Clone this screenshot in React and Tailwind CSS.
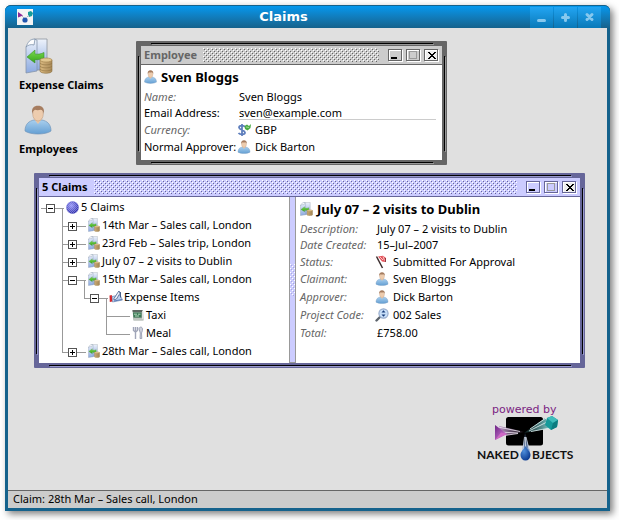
import React from 'react';

const SANS = "font-['Noto_Sans','Open_Sans',sans-serif]";

function ClaimIcon({ className }) {
  return (
    <svg viewBox="0 0 28 36" className={className} aria-hidden="true" preserveAspectRatio="none">
      <defs>
        <linearGradient id="page" x1="0" y1="0" x2="0" y2="1">
          <stop offset="0" stopColor="#eef3fb" />
          <stop offset="1" stopColor="#8ba9e0" />
        </linearGradient>
        <linearGradient id="coin" x1="0" y1="0" x2="1" y2="0">
          <stop offset="0" stopColor="#d9b880" />
          <stop offset="1" stopColor="#a98a58" />
        </linearGradient>
        <linearGradient id="arrow" x1="0" y1="0" x2="0" y2="1">
          <stop offset="0" stopColor="#7ada4e" />
          <stop offset="1" stopColor="#38a51b" />
        </linearGradient>
      </defs>
      <path d="M10 1h12v31H10z" fill="url(#page)" stroke="#8d959f" strokeWidth=".8" />
      <path d="M9 1l3 1v31L1 35V9z" fill="url(#page)" stroke="#8796aa" strokeWidth=".8" />
      <path d="M1 9C3 4 5 1 10 1L9 7c-3-1-6 0-8 2z" fill="#fdfdfe" stroke="#7f93ab" strokeWidth=".8" />
      <path d="M2 19l8-7v4c3 .5 6 0 9-1.500V20c-3 1.500-6 2-9 1.500V25z" fill="url(#arrow)" stroke="#3a8f2b" strokeWidth=".6" />
      <path d="M15 22v11c0 3 12 3 12 0V22z" fill="url(#coin)" stroke="#8c7040" strokeWidth=".6" />
      <path d="M15 25c1 2.500 11 2.500 12 0M15 28c1 2.500 11 2.500 12 0M15 31c1 2.500 11 2.500 12 0" fill="none" stroke="#8f7242" strokeWidth=".6" />
      <ellipse cx="21" cy="22" rx="6" ry="2" fill="#e2c68f" stroke="#a07f4a" strokeWidth=".6" />
    </svg>
  );
}

function PersonIcon({ className }) {
  return (
    <svg viewBox="0 0 28 30" className={className} aria-hidden="true">
      <defs>
        <linearGradient id="shirt" x1="0" y1="0" x2="0" y2="1">
          <stop offset="0" stopColor="#a9cfee" />
          <stop offset="1" stopColor="#649fd3" />
        </linearGradient>
      </defs>
      <path d="M1 26c0-7 4-10 9-11h8c5 1 9 4 9 11-5 4-21 4-26 0z" fill="url(#shirt)" stroke="#7396ba" strokeWidth=".7" />
      <path d="M10 14l4 5 4-5-1-3h-6z" fill="#e8c5a5" />
      <ellipse cx="14" cy="9" rx="5.300" ry="7" fill="#edccae" stroke="#b9977b" strokeWidth=".5" />
      <path d="M8.300 9C7 3 10 .7 14 .7S21 3 19.700 9c-.4-3-1.500-4-3-4.200-2 .5-4 .5-5.700 0-1.500.7-2.400 2-2.700 4.200z" fill="#a67d60" />
    </svg>
  );
}

function CurrencyIcon({ className }) {
  return (
    <svg viewBox="0 0 14 14" className={className} aria-hidden="true">
      <path d="M8 4C7 2 2 2 2 4.500S8 7 8 9.500 3 12 1.500 10M5 1v12" fill="none" stroke="#5f7fbd" strokeWidth="1.800" />
      <path d="M7.500 3l2.500-1.500L12 3l2-2-.5 4-3 2.500L8 6z" fill="#4cab45" />
      <path d="M9 4l3 .5" stroke="#a8dd9c" strokeWidth=".9" />
    </svg>
  );
}

function FlagIcon({ className }) {
  return (
    <svg viewBox="0 0 14 14" className={className} aria-hidden="true">
      <path d="M3 1.500L8 .8l3 2.200-.5 4L7 6.500z" fill="#e4525a" />
      <path d="M5 2l3 3M8 1.500l1.500 4" stroke="#f8c4c5" strokeWidth="1" />
      <path d="M1.500 1.500l6 11.500" stroke="#3a2c2c" strokeWidth="1.500" />
      <path d="M10.500 3v4" stroke="#7c2a2f" strokeWidth=".8" />
    </svg>
  );
}

function MagnifierIcon({ className }) {
  return (
    <svg viewBox="0 0 14 14" className={className} aria-hidden="true">
      <path d="M1.500 12.500l3.500-3.500" stroke="#5d646c" strokeWidth="2.400" strokeLinecap="round" />
      <circle cx="8.500" cy="5.500" r="4.600" fill="#c8dff8" stroke="#93a8c9" strokeWidth="1.100" />
      <path d="M8.500 2.300l2 2.300h-4zM8.500 8.700l2-2.300h-4z" fill="#173c7b" />
    </svg>
  );
}

function BallIcon({ className }) {
  return (
    <svg viewBox="0 0 13 13" className={className} aria-hidden="true">
      <defs>
        <radialGradient id="ball" cx=".4" cy=".35" r=".65">
          <stop offset="0" stopColor="#9c9cf8" />
          <stop offset="1" stopColor="#2e2ea6" />
        </radialGradient>
        <pattern id="weave" width="2" height="2" patternUnits="userSpaceOnUse">
          <path d="M0 0h1v1H0zM1 1h1v1H1z" fill="#b9b9ff" opacity=".45" />
        </pattern>
      </defs>
      <circle cx="6.500" cy="6.500" r="6.200" fill="url(#ball)" />
      <circle cx="6.500" cy="6.500" r="6.200" fill="url(#weave)" />
    </svg>
  );
}

function ItemsIcon({ className }) {
  return (
    <svg viewBox="0 0 14 14" className={className} aria-hidden="true">
      <path d="M3 6.500l8-1.500 2.500 5-10 2z" fill="#bdd0ee" stroke="#6d88b4" strokeWidth=".7" />
      <path d="M.5 5.500l2.300-.5.400 6.500-2.400.5z" fill="#d2262c" />
      <path d="M5 8.500L9.500 1.500l2 1-4 6.500-2.500 1z" fill="#eef2f9" stroke="#4a6391" strokeWidth=".8" />
      <path d="M9.500 1.500l2 1v5" fill="none" stroke="#35517f" strokeWidth=".9" />
      <path d="M5 11l8-1.500" stroke="#5b7db8" strokeWidth="1" />
    </svg>
  );
}

function TaxiIcon({ className }) {
  return (
    <svg viewBox="0 0 12 12" className={className} aria-hidden="true">
      <path d="M.5 1h10.500l.5 10.500H1.500z" fill="#9ba59d" />
      <path d="M.5 1H10v2H.700z" fill="#5c6660" />
      <path d="M1 3.500h8.500v5H1.500z" fill="#3b7a56" />
      <path d="M2 5.200h3M6 5.200h2.500M3 7h4" stroke="#c0e2c6" strokeWidth=".9" />
      <path d="M2 10h9M10.500 2v8" stroke="#dfe3df" />
    </svg>
  );
}

function MealIcon({ className }) {
  return (
    <svg viewBox="0 0 12 14" className={className} aria-hidden="true">
      <path d="M1.500 1v3.500l2 1.500 2-1.500V1M3.500 1v12" fill="none" stroke="#a0a5b8" strokeWidth="1.400" />
      <path d="M7 3c0-2.500 3.500-2.500 3.500 0s-.5 2.500-1 4l.3 5.500H8L8.300 7z" fill="#ccd0dc" stroke="#999eb2" strokeWidth=".9" />
    </svg>
  );
}

const TONES = {
  gray: {
    frame: 'bg-[#666666]',
    glow: 'bg-[#999999]',
    bar: 'bg-[#cccccc] text-[#666666] border-[#666666]',
    fill: '#cccccc',
    dark: '#666666',
  },
  violet: {
    frame: 'bg-[#666699]',
    glow: 'bg-[#9999cc]',
    bar: 'bg-[#ccccff] text-black border-[#666699]',
    fill: '#ccccff',
    dark: '#666699',
  },
};

function Bumps({ id, fill, dark }) {
  return (
    <svg className="block h-full w-full" shapeRendering="crispEdges" aria-hidden="true">
      <defs>
        <pattern id={id} width="4" height="4" patternUnits="userSpaceOnUse">
          <rect width="4" height="4" fill={fill} />
          <path d="M0 0h1v1H0zM2 2h1v1H2z" fill="#fff" />
          <path d="M1 1h1v1H1zM3 3h1v1H3z" fill={dark} />
        </pattern>
      </defs>
      <rect width="100%" height="100%" fill={`url(#${id})`} />
    </svg>
  );
}

function FrameButton({ label, dark, fill, children }) {
  return (
    <button type="button" aria-label={label} className="h-[13px] w-[15px]">
      <svg viewBox="0 0 15 13" className="block h-[13px] w-[15px]" shapeRendering="crispEdges">
        <path d="M1 1h14v12H1z" fill="#fff" />
        <path d="M0 0h14v12H0z" fill={dark} />
        <path d="M1 1h12v10H1z" fill="#fff" />
        <path d="M2 2h11v9H2z" fill={fill} />
        {children}
      </svg>
    </button>
  );
}

function InnerWindow({ title, tone, className, children }) {
  const t = TONES[tone];
  return (
    <section aria-label={title} className={`absolute flex flex-col rounded-[1px] p-[5px] ${t.frame} ${className}`}>
      <i className="absolute top-[2px] right-[14px] left-[15px] h-px bg-black" />
      <i className={`absolute top-[3px] right-[13px] left-[16px] h-px ${t.glow}`} />
      <i className="absolute right-[14px] bottom-[2px] left-[15px] h-px bg-black" />
      <i className={`absolute right-[13px] bottom-[1px] left-[16px] h-px ${t.glow}`} />
      <i className="absolute top-[15px] bottom-[14px] left-[2px] w-px bg-black" />
      <i className={`absolute top-[16px] bottom-[13px] left-[3px] w-px ${t.glow}`} />
      <i className="absolute top-[15px] right-[2px] bottom-[14px] w-px bg-black" />
      <i className={`absolute top-[16px] right-[1px] bottom-[13px] w-px ${t.glow}`} />
      <header className={`flex h-[19px] shrink-0 items-center border-b pr-[3px] pl-[3px] ${t.bar}`}>
        <h2 className="text-[11px] leading-[16px] font-bold">{title}</h2>
        <div className="mr-[9px] ml-[6px] h-[14px] flex-1">
          <Bumps id={`bumps-${tone}`} fill={t.fill} dark={t.dark} />
        </div>
        <div className="flex gap-[3px]">
          <FrameButton label="Minimize" dark={t.dark} fill={t.fill}>
            <path d="M3 8h6v2H3z" fill="#000" />
          </FrameButton>
          <FrameButton label="Maximize" dark={t.dark} fill={t.fill}>
            <path d="M3 2h8v8H3zM4 3v6h6V3z" fill="#999999" fillRule="evenodd" />
          </FrameButton>
          <FrameButton label="Close" dark={t.dark} fill="#eeeeee">
            <path d="M4 3h2v1h1v1h2V4h1V3h2v1h-1v1h-1v1H9v1h1v1h1v1h1v1h-2V9H9V8H7v1H6v1H4V9h1V8h1V7h1V6H6V5H5V4H4z" fill="#000" />
          </FrameButton>
        </div>
      </header>
      {children}
    </section>
  );
}

function Heading({ icon, children }) {
  return (
    <div className="flex h-6 items-center gap-1 pb-px">
      {icon}
      <h3 className="text-[13px] leading-[18px] font-bold">{children}</h3>
    </div>
  );
}

const ROW_HEIGHTS = { short: 'h-4', middle: 'h-[17px]', tall: 'h-[18px]' };

function Field({ label, plain, icon, size = 'short', labelWidth, children }) {
  return (
    <div className={`flex items-center ${ROW_HEIGHTS[size]}`}>
      <dt className={`shrink-0 ${labelWidth} ${plain ? 'text-black' : 'text-[#666666] italic'}`}>{label}</dt>
      <dd className="flex min-w-0 flex-1 items-center gap-1">
        {icon}
        {children}
      </dd>
    </div>
  );
}

function Cell({ up, down, line, handle }) {
  return (
    <span className="flex h-[18px] w-[22px] shrink-0 items-start">
      <svg className="h-[18px] w-[22px] shrink-0" viewBox="0 0 22 18" shapeRendering="crispEdges" aria-hidden="true">
        {up && <path d="M0 0h1v11H0z" fill="#999999" />}
        {down && <path d="M0 10h1v8H0z" fill="#999999" />}
        {line && <path d="M1 10h21v1H1z" fill="#999999" />}
      </svg>
      {handle && (
        <button type="button" aria-label={handle === 'open' ? 'Collapse' : 'Expand'} className="mt-[6px] -ml-4 h-[9px] w-[9px] shrink-0">
          <svg viewBox="0 0 9 9" className="block h-[9px] w-[9px]" shapeRendering="crispEdges">
            <path d="M0 0h9v9H0z" fill="#555" />
            <path d="M1 1h7v7H1z" fill="#fff" />
            <path d="M2 4h5v1H2z" fill="#000" />
            {handle === 'closed' && <path d="M4 2h1v5H4z" fill="#000" />}
          </svg>
        </button>
      )}
    </span>
  );
}

function Stub({ open }) {
  return (
    <svg className="mr-px h-[18px] w-[3px] shrink-0" viewBox="0 0 3 18" shapeRendering="crispEdges" aria-hidden="true">
      <path d={open ? 'M0 10h2v1H1v7H0z' : 'M0 10h2v1H0z'} fill="#999999" />
    </svg>
  );
}

const T = { up: true, line: true, down: true };
const END = { up: true, line: true };
const V = { up: true, down: true };
const claim = <ClaimIcon className="h-[14px] w-3" />;

const TREE = [
  { cells: [{ line: true, handle: 'open' }], open: true, icon: <BallIcon className="h-[13px] w-[13px]" />, text: '5 Claims' },
  { cells: [{}, { ...T, handle: 'closed' }], icon: claim, text: '14th Mar – Sales call, London' },
  { cells: [{}, { ...T, handle: 'closed' }], icon: claim, text: '23rd Feb – Sales trip, London' },
  { cells: [{}, { ...T, handle: 'closed' }], icon: claim, text: 'July 07 – 2 visits to Dublin' },
  { cells: [{}, { ...T, handle: 'open' }], open: true, icon: claim, text: '15th Mar – Sales call, London' },
  { cells: [{}, V, { ...END, handle: 'open' }], open: true, icon: <ItemsIcon className="-mr-px -ml-px h-[14px] w-[14px]" />, text: 'Expense Items' },
  { cells: [{}, V, {}, T], icon: <TaxiIcon className="h-3 w-3" />, text: 'Taxi' },
  { cells: [{}, V, {}, END], icon: <MealIcon className="h-[14px] w-3" />, text: 'Meal' },
  { cells: [{}, { ...END, handle: 'closed' }], icon: claim, text: '28th Mar – Sales call, London' },
];

function TreeView() {
  return (
    <ul className="w-[250px] shrink-0 bg-white pt-px pl-px text-[11px] leading-[16px]">
      {TREE.map((row) => (
        <li key={row.text} className="flex h-[18px] items-center">
          {row.cells.map((c, i) => (
            <Cell key={i} {...c} />
          ))}
          <Stub open={row.open} />
          {row.icon}
          <span className="ml-[2px] whitespace-nowrap">{row.text}</span>
        </li>
      ))}
    </ul>
  );
}

function TitleButton({ label, children }) {
  return (
    <button type="button" aria-label={label} className="flex h-[21px] w-[23px] items-center justify-center bg-linear-to-b from-[#22a5f3] to-[#0879b8]">
      <svg viewBox="0 0 11 11" className="h-[11px] w-[11px]" fill="none" stroke="#86c8ee" strokeWidth="3" strokeLinecap="round">
        {children}
      </svg>
    </button>
  );
}

function NakedObjectsLogo() {
  return (
    <svg viewBox="0 0 100 60" className="h-[60px] w-[100px]" role="img" aria-label="powered by Naked Objects">
      <defs>
        <linearGradient id="cone" x1="0" y1="0" x2="1" y2="1">
          <stop offset="0" stopColor="#6d2386" />
          <stop offset="1" stopColor="#dd8bdc" />
        </linearGradient>
        <radialGradient id="drop" cx=".35" cy=".35" r=".7">
          <stop offset="0" stopColor="#4f8fdc" />
          <stop offset="1" stopColor="#0b3a90" />
        </radialGradient>
        <linearGradient id="rayPurple" x1="0" y1="0" x2="1" y2="0">
          <stop offset="0" stopColor="#c9a0d6" />
          <stop offset="1" stopColor="#000" />
        </linearGradient>
        <linearGradient id="rayTeal" x1="1" y1="0" x2="0" y2="0">
          <stop offset="0" stopColor="#7cc9ca" />
          <stop offset="1" stopColor="#0a1a1a" />
        </linearGradient>
        <linearGradient id="rayBlue" x1="0" y1="1" x2="0" y2="0">
          <stop offset="0" stopColor="#8db0e6" />
          <stop offset="1" stopColor="#05080f" />
        </linearGradient>
      </defs>
      <text x="16" y="11" fontSize="11" fill="#7b2482" className="font-['DejaVu_Sans',sans-serif]">powered by</text>
      <rect x="30" y="15" width="37" height="28.500" rx="2.500" fill="#000" />
      <path d="M49 30L23 24l-2 11z" fill="url(#rayPurple)" />
      <path d="M44 29.500L22 25M42 31L23 30M42 31.500L25 34" stroke="#f3e9f6" strokeWidth=".8" />
      <path d="M48 31L69 16l6 10z" fill="url(#rayTeal)" />
      <path d="M54 27L70 16M53 29l18-9M55 29.500L74 26" stroke="#e4f5f5" strokeWidth=".8" />
      <path d="M49 30L46 50h8z" fill="url(#rayBlue)" />
      <path d="M48.500 35L47 48M49.500 35v12M50 35l3 12" stroke="#e8effa" strokeWidth=".7" />
      <path d="M19 23l12 9-12 6z" fill="url(#cone)" />
      <path d="M19 38l12-6-6-1.500z" fill="#cf6ac4" />
      <path d="M71 16l5-2 6 4-1 7-6 3-6-5z" fill="#159a9a" />
      <path d="M71 16l5-2 6 4-5 3z" fill="#3fbdbb" />
      <path d="M77 21l5-3-1 7-6 3z" fill="#0c7c80" />
      <path d="M49.500 44c1.500 4 5 5 5 9a5 5.500 0 0 1-10 0c0-4 3.500-5 5-9z" fill="url(#drop)" />
      <g fontSize="12" fontWeight="700" fill="#111" className="font-['Lato',sans-serif]">
        <text x="1" y="57">NAKED</text>
        <text x="56" y="57">BJECTS</text>
      </g>
    </svg>
  );
}

export default function App() {
  return (
    <div className={`flex h-screen min-h-[440px] bg-white pt-[5px] pr-[9px] pb-[9px] pl-[5px] text-[11px] leading-[16px] text-black ${SANS}`}>
      <div className="flex min-w-0 flex-1 flex-col rounded-t-[6px] bg-[#15628c] px-[3px] pb-[3px] shadow-[3px_3px_7px_rgba(0,0,0,0.5)]">
        <header className="-mx-[3px] flex h-[23px] shrink-0 items-center rounded-t-[6px] border-t border-[#15628c] bg-linear-to-b from-[#0398ee] to-[#15628c] pr-[9px] pl-[12px]">
          <svg viewBox="0 0 16 16" className="h-4 w-4" aria-hidden="true">
            <path d="M0 0h16v16H0z" fill="#f4f4f4" />
            <path d="M1 3l5 3.500-5 2z" fill="#8d2a98" />
            <path d="M11 3l3-1 2 2-1 3-3 1-1-2z" fill="#159c99" />
            <path d="M5 7l2 2M12 6L9.500 8.500" stroke="#a9b3c4" />
            <circle cx="8" cy="11" r="2.600" fill="#2055ae" />
          </svg>
          <h1 className="ml-[4px] flex-1 text-center font-['DejaVu_Sans',sans-serif] text-[13px] leading-[16px] font-bold text-white">Claims</h1>
          <div className="flex gap-px">
            <TitleButton label="Minimize"><path d="M2.500 8.500h6" /></TitleButton>
            <TitleButton label="Maximize"><path d="M2.500 5.500h6M5.500 2.500v6" /></TitleButton>
            <TitleButton label="Close"><path d="M3 2.500l5 5M8 2.500l-5 5" /></TitleButton>
          </div>
        </header>

        <main className="relative flex flex-1 flex-col bg-[#e0e0e0]">
          <nav className="flex flex-col items-start pt-[10px] pl-[11px] font-bold">
            <button type="button" className="flex flex-col items-start">
              <ClaimIcon className="ml-[6px] h-9 w-7" />
              <span className="mt-[3px]">Expense Claims</span>
            </button>
            <button type="button" className="mt-[12px] flex flex-col items-start">
              <PersonIcon className="ml-[5px] h-[30px] w-7" />
              <span className="mt-[6px]">Employees</span>
            </button>
          </nav>

          <InnerWindow title="Employee" tone="gray" className="top-[13px] left-[128px] h-[124px] w-[311px]">
            <div className="flex-1 bg-white pl-[3px]">
              <Heading icon={<PersonIcon className="h-[14px] w-[13px]" />}>Sven Bloggs</Heading>
              <dl>
                <Field label="Name:" labelWidth="w-[95px]">Sven Bloggs</Field>
                <Field label={<label htmlFor="email">Email Address:</label>} plain labelWidth="w-[95px]">
                  <input id="email" type="text" defaultValue="sven@example.com" className="mr-[6px] h-[13px] min-w-0 flex-1 border-b border-[#cccccc] bg-transparent leading-[12px] outline-none" />
                </Field>
                <Field label="Currency:" size="middle" labelWidth="w-[93px]" icon={<CurrencyIcon className="h-[14px] w-[14px]" />}>GBP</Field>
                <Field label="Normal Approver:" plain size="tall" labelWidth="w-[93px]" icon={<PersonIcon className="h-[14px] w-[14px]" />}>Dick Barton</Field>
              </dl>
            </div>
          </InnerWindow>

          <InnerWindow title="5 Claims" tone="violet" className="top-[145px] left-[26px] h-[195px] w-[551px]">
            <div className="flex min-h-0 flex-1 bg-white">
              <TreeView />
              <div className="flex w-[7px] shrink-0 items-center border-x border-b border-[#999999] bg-[#ccccff]">
                <div className="h-8 w-full">
                  <Bumps id="bumps-split" fill="#ccccff" dark="#aaaadd" />
                </div>
              </div>
              <div className="flex-1 pl-[4px]">
                <Heading icon={<ClaimIcon className="h-[14px] w-[13px]" />}>July 07 – 2 visits to Dublin</Heading>
                <dl>
                  <Field label="Description:" labelWidth="w-[77px]">July 07 – 2 visits to Dublin</Field>
                  <Field label="Date Created:" labelWidth="w-[77px]">15–Jul–2007</Field>
                  <Field label="Status:" size="middle" labelWidth="w-[75px]" icon={<FlagIcon className="h-[14px] w-[14px]" />}>Submitted For Approval</Field>
                  <Field label="Claimant:" size="tall" labelWidth="w-[75px]" icon={<PersonIcon className="h-[14px] w-[14px]" />}>Sven Bloggs</Field>
                  <Field label="Approver:" size="tall" labelWidth="w-[75px]" icon={<PersonIcon className="h-[14px] w-[14px]" />}>Dick Barton</Field>
                  <Field label="Project Code:" size="tall" labelWidth="w-[75px]" icon={<MagnifierIcon className="h-[14px] w-[14px]" />}>002 Sales</Field>
                  <Field label="Total:" size="tall" labelWidth="w-[77px]">£758.00</Field>
                </dl>
              </div>
            </div>
          </InnerWindow>

          <div className="mt-auto flex justify-end pr-[31px] pb-[28px]">
            <NakedObjectsLogo />
          </div>
        </main>

        <footer className="h-[18px] shrink-0 border-t border-[#666666] bg-[#cccccc] pl-[5px]">Claim: 28th Mar – Sales call, London</footer>
      </div>
    </div>
  );
}
